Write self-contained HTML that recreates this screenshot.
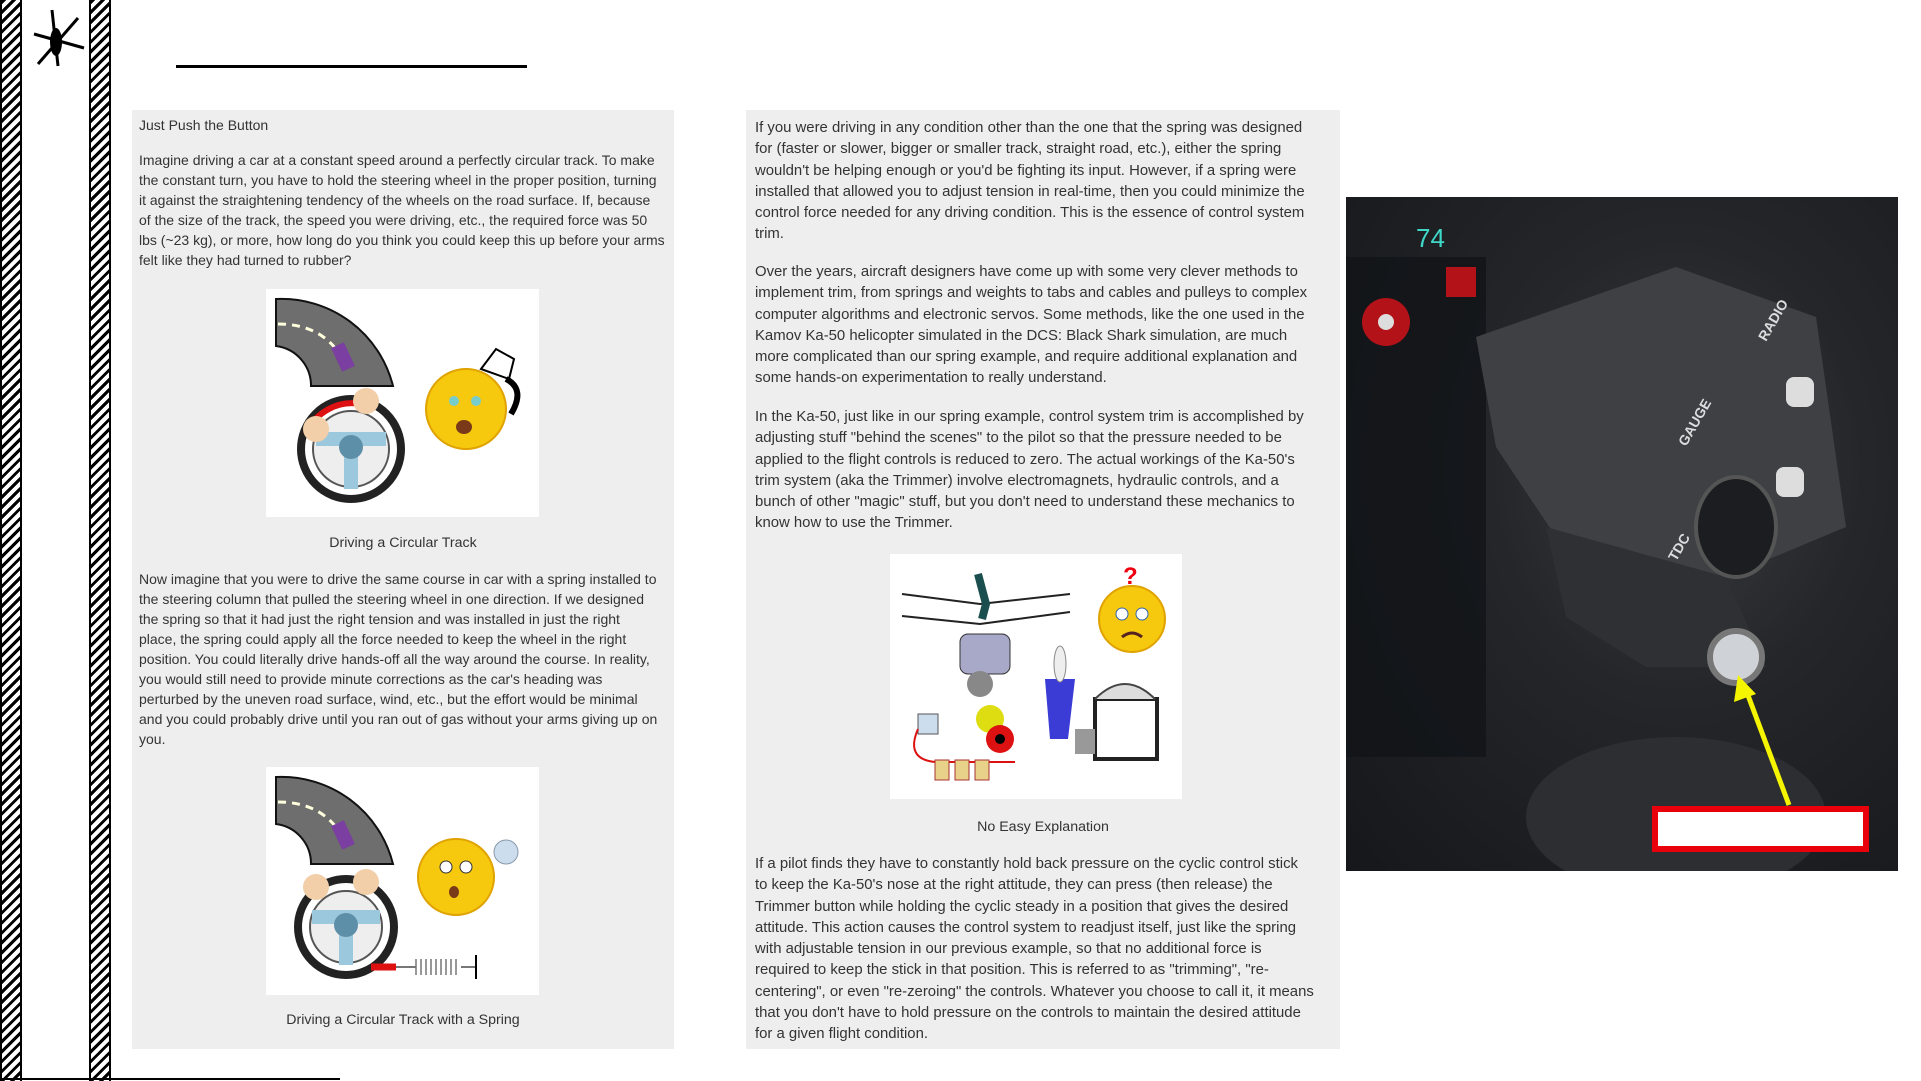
<!DOCTYPE html>
<html><head><meta charset="utf-8"><style>
*{margin:0;padding:0;box-sizing:border-box}
body{width:1921px;height:1081px;background:#fff;position:relative;overflow:hidden;font-family:"Liberation Sans",Arial,sans-serif;color:#333}
.stripe{position:absolute;top:0;height:1081px;width:22px;border-left:2px solid #000;border-right:2px solid #000;background:repeating-linear-gradient(135deg,#000 0 3px,#fff 3px 7px)}
.box{position:absolute;background:#eee}
.t{position:absolute;font-size:14px;line-height:20px;white-space:nowrap}
.t div{height:20px}
.m{font-size:14.9px;line-height:21.3px}
.m div{height:21.3px}
.cap{position:absolute;font-size:14.2px;line-height:20px;text-align:center;white-space:nowrap}
.img{position:absolute;background:#fff}
</style></head><body>
<div class="stripe" style="left:0"></div>
<div class="stripe" style="left:89px"></div>
<svg style="position:absolute;left:26px;top:6px" width="60" height="66" viewBox="0 0 60 66">
<g stroke="#000" stroke-width="3" fill="none"><line x1="8" y1="28" x2="58" y2="42"/><line x1="26" y1="4" x2="32" y2="60"/><line x1="12" y1="58" x2="52" y2="12"/></g>
<ellipse cx="30" cy="36" rx="6" ry="14" fill="#000"/></svg>
<div style="position:absolute;left:176px;top:65px;width:351px;height:3px;background:#000"></div>
<div style="position:absolute;left:0;top:1078px;width:340px;height:2px;background:#000"></div>

<div class="box" style="left:132px;top:110px;width:542px;height:939px"></div>
<div class="box" style="left:746px;top:110px;width:594px;height:939px"></div>

<div class="t" style="left:139px;top:115px"><div>Just Push the Button</div></div>
<div class="t" style="left:139px;top:150px">
<div>Imagine driving a car at a constant speed around a perfectly circular track. To make</div>
<div>the constant turn, you have to hold the steering wheel in the proper position, turning</div>
<div>it against the straightening tendency of the wheels on the road surface. If, because</div>
<div>of the size of the track, the speed you were driving, etc., the required force was 50</div>
<div>lbs (~23 kg), or more, how long do you think you could keep this up before your arms</div>
<div>felt like they had turned to rubber?</div></div>

<div class="img" style="left:266px;top:289px;width:273px;height:228px">
<svg width="273" height="228" viewBox="0 0 273 228">
<path d="M10 10 A115 115 0 0 1 127 97 L45 97 A40 40 0 0 0 10 57Z" fill="#6e6e6e" stroke="#111" stroke-width="2"/>
<path d="M12 35 Q50 35 70 60" stroke="#ffd" stroke-width="3" stroke-dasharray="8 6" fill="none"/>
<rect x="70" y="55" width="14" height="26" fill="#7a3fa0" transform="rotate(-25 77 68)"/>
<circle cx="85" cy="160" r="50" fill="#fff" stroke="#222" stroke-width="8"/>
<circle cx="85" cy="160" r="38" fill="#eee" stroke="#555" stroke-width="2"/>
<path d="M50 150 L120 150 M85 160 L85 200" stroke="#9cc8dd" stroke-width="14"/>
<circle cx="85" cy="158" r="12" fill="#5e8fa8"/>
<path d="M40 145 A50 50 0 0 1 95 115" stroke="#d11" stroke-width="6" fill="none"/>
<circle cx="50" cy="140" r="13" fill="#f2cfa8"/><circle cx="100" cy="112" r="13" fill="#f2cfa8"/>
<circle cx="200" cy="120" r="40" fill="#f6c90e" stroke="#e0a200" stroke-width="2"/>
<circle cx="188" cy="112" r="5" fill="#7cc"/><circle cx="210" cy="112" r="5" fill="#7cc"/>
<ellipse cx="198" cy="138" rx="8" ry="7" fill="#7a3a1a"/>
<path d="M215 80 l15 -20 l18 10 l-5 20z" fill="#fff" stroke="#000" stroke-width="2"/>
<path d="M240 90 Q260 100 245 125" stroke="#000" stroke-width="6" fill="none"/>
</svg></div>
<div class="cap" style="left:132px;width:542px;top:533px">Driving a Circular Track</div>

<div class="t" style="left:139px;top:569px">
<div>Now imagine that you were to drive the same course in car with a spring installed to</div>
<div>the steering column that pulled the steering wheel in one direction. If we designed</div>
<div>the spring so that it had just the right tension and was installed in just the right</div>
<div>place, the spring could apply all the force needed to keep the wheel in the right</div>
<div>position. You could literally drive hands-off all the way around the course. In reality,</div>
<div>you would still need to provide minute corrections as the car's heading was</div>
<div>perturbed by the uneven road surface, wind, etc., but the effort would be minimal</div>
<div>and you could probably drive until you ran out of gas without your arms giving up on</div>
<div>you.</div></div>

<div class="img" style="left:266px;top:767px;width:273px;height:228px">
<svg width="273" height="228" viewBox="0 0 273 228">
<path d="M10 10 A115 115 0 0 1 127 97 L45 97 A40 40 0 0 0 10 57Z" fill="#6e6e6e" stroke="#111" stroke-width="2"/>
<path d="M12 35 Q50 35 70 60" stroke="#ffd" stroke-width="3" stroke-dasharray="8 6" fill="none"/>
<rect x="70" y="55" width="14" height="26" fill="#7a3fa0" transform="rotate(-25 77 68)"/>
<circle cx="80" cy="160" r="48" fill="#fff" stroke="#222" stroke-width="8"/>
<circle cx="80" cy="160" r="36" fill="#eee" stroke="#555" stroke-width="2"/>
<path d="M46 150 L114 150 M80 160 L80 198" stroke="#9cc8dd" stroke-width="14"/>
<circle cx="80" cy="158" r="12" fill="#5e8fa8"/>
<circle cx="50" cy="120" r="13" fill="#f2cfa8"/><circle cx="100" cy="115" r="13" fill="#f2cfa8"/>
<path d="M105 200 L130 200" stroke="#d11" stroke-width="7"/>
<path d="M130 200 L150 200 M195 200 L210 200" stroke="#777" stroke-width="2"/>
<path d="M150 192 l0 16 m5 -16 l0 16 m5 -16 l0 16 m5 -16 l0 16 m5 -16 l0 16 m5 -16 l0 16 m5 -16 l0 16 m5 -16 l0 16 m5 -16 l0 16" stroke="#777" stroke-width="1.5"/>
<line x1="210" y1="188" x2="210" y2="212" stroke="#000" stroke-width="2"/>
<circle cx="190" cy="110" r="38" fill="#f6c90e" stroke="#e0a200" stroke-width="2"/>
<circle cx="180" cy="100" r="6" fill="#fff" stroke="#333"/><circle cx="200" cy="100" r="6" fill="#fff" stroke="#333"/>
<ellipse cx="188" cy="125" rx="5" ry="6" fill="#7a3a1a"/>
<circle cx="240" cy="85" r="12" fill="#cde" stroke="#89a"/>
</svg></div>
<div class="cap" style="left:132px;width:542px;top:1010px">Driving a Circular Track with a Spring</div>

<div class="t m" style="left:755px;top:118px">
<div>If you were driving in any condition other than the one that the spring was designed</div>
<div>for (faster or slower, bigger or smaller track, straight road, etc.), either the spring</div>
<div>wouldn't be helping enough or you'd be fighting its input. However, if a spring were</div>
<div>installed that allowed you to adjust tension in real-time, then you could minimize the</div>
<div>control force needed for any driving condition. This is the essence of control system</div>
<div>trim.</div></div>
<div class="t m" style="left:755px;top:262px">
<div>Over the years, aircraft designers have come up with some very clever methods to</div>
<div>implement trim, from springs and weights to tabs and cables and pulleys to complex</div>
<div>computer algorithms and electronic servos. Some methods, like the one used in the</div>
<div>Kamov Ka-50 helicopter simulated in the DCS: Black Shark simulation, are much</div>
<div>more complicated than our spring example, and require additional explanation and</div>
<div>some hands-on experimentation to really understand.</div></div>
<div class="t m" style="left:755px;top:407px">
<div>In the Ka-50, just like in our spring example, control system trim is accomplished by</div>
<div>adjusting stuff "behind the scenes" to the pilot so that the pressure needed to be</div>
<div>applied to the flight controls is reduced to zero. The actual workings of the Ka-50's</div>
<div>trim system (aka the Trimmer) involve electromagnets, hydraulic controls, and a</div>
<div>bunch of other "magic" stuff, but you don't need to understand these mechanics to</div>
<div>know how to use the Trimmer.</div></div>

<div class="img" style="left:890px;top:554px;width:292px;height:245px">
<svg width="292" height="245" viewBox="0 0 292 245">
<path d="M12 40 L90 50 L180 40 M12 62 L90 70 L180 58" stroke="#222" stroke-width="2" fill="none"/>
<path d="M88 20 L96 50 L92 65" stroke="#1b4f4f" stroke-width="8" fill="none"/>
<rect x="70" y="80" width="50" height="40" rx="8" fill="#a8a8c8" stroke="#333"/>
<circle cx="90" cy="130" r="13" fill="#888"/><circle cx="100" cy="165" r="14" fill="#dd1"/>
<circle cx="110" cy="185" r="14" fill="#d11"/><circle cx="110" cy="185" r="5" fill="#000"/>
<path d="M155 125 L185 125 L178 185 L160 185Z" fill="#3b3bd6"/>
<ellipse cx="170" cy="110" rx="6" ry="18" fill="#eee" stroke="#888"/>
<rect x="205" y="145" width="62" height="60" fill="none" stroke="#222" stroke-width="4"/>
<path d="M205 145 Q235 115 265 145" fill="#ddd" stroke="#444" stroke-width="2"/>
<rect x="185" y="175" width="20" height="25" fill="#999"/>
<rect x="28" y="160" width="20" height="20" fill="#cde" stroke="#555"/>
<path d="M28 175 Q15 205 45 208 L125 208" stroke="#d11" stroke-width="2" fill="none"/>
<rect x="45" y="206" width="14" height="20" fill="#e8d28a" stroke="#a33"/><rect x="65" y="206" width="14" height="20" fill="#e8d28a" stroke="#a33"/><rect x="85" y="206" width="14" height="20" fill="#e8d28a" stroke="#a33"/>
<circle cx="242" cy="65" r="33" fill="#f6c90e" stroke="#e0a200" stroke-width="2"/>
<circle cx="232" cy="60" r="6" fill="#fff" stroke="#36a"/><circle cx="252" cy="60" r="6" fill="#fff" stroke="#36a"/>
<path d="M232 83 Q242 75 252 83" stroke="#522" stroke-width="3" fill="none"/>
<text x="233" y="30" font-family="Liberation Sans" font-weight="bold" font-size="24" fill="#e01">?</text>
</svg></div>
<div class="cap" style="left:746px;width:594px;top:817px">No Easy Explanation</div>

<div class="t m" style="left:755px;top:854px">
<div>If a pilot finds they have to constantly hold back pressure on the cyclic control stick</div>
<div>to keep the Ka-50's nose at the right attitude, they can press (then release) the</div>
<div>Trimmer button while holding the cyclic steady in a position that gives the desired</div>
<div>attitude. This action causes the control system to readjust itself, just like the spring</div>
<div>with adjustable tension in our previous example, so that no additional force is</div>
<div>required to keep the stick in that position. This is referred to as "trimming", "re-</div>
<div>centering", or even "re-zeroing" the controls. Whatever you choose to call it, it means</div>
<div>that you don't have to hold pressure on the controls to maintain the desired attitude</div>
<div>for a given flight condition.</div></div>

<div style="position:absolute;left:1346px;top:197px;width:552px;height:674px;background:radial-gradient(ellipse at 60% 40%,#3a3b3e 0%,#24262a 40%,#15171b 100%);overflow:hidden">
<svg width="552" height="674" viewBox="0 0 552 674">
<rect x="0" y="60" width="140" height="500" fill="#111418" opacity=".8"/>
<path d="M130 140 L330 70 L470 120 L500 330 L380 380 L210 340 L150 250Z" fill="#3e4044"/>
<path d="M200 330 L380 380 L420 470 L300 470 L220 420Z" fill="#2e3034"/>
<ellipse cx="390" cy="330" rx="40" ry="50" fill="#1c1d20" stroke="#555" stroke-width="4"/>
<circle cx="390" cy="460" r="26" fill="#cfd2d6" stroke="#777" stroke-width="6"/>
<ellipse cx="330" cy="620" rx="150" ry="80" fill="#2c2e32"/>
<rect x="440" y="180" width="28" height="30" rx="8" fill="#ddd"/>
<rect x="430" y="270" width="28" height="30" rx="8" fill="#ddd"/>
<circle cx="40" cy="125" r="24" fill="#b31218"/><circle cx="40" cy="125" r="8" fill="#ddd"/>
<rect x="100" y="70" width="30" height="30" fill="#b31218"/>
<text x="70" y="50" fill="#3fd8c8" font-family="Liberation Sans" font-size="26">74</text>
<text x="340" y="250" fill="#ddd" font-family="Liberation Sans" font-weight="bold" font-size="14" transform="rotate(-60 340 250)">GAUGE</text>
<text x="420" y="145" fill="#ddd" font-family="Liberation Sans" font-weight="bold" font-size="14" transform="rotate(-60 420 145)">RADIO</text>
<text x="330" y="365" fill="#ddd" font-family="Liberation Sans" font-weight="bold" font-size="14" transform="rotate(-60 330 365)">TDC</text>
<line x1="443" y1="608" x2="400" y2="493" stroke="#f5f500" stroke-width="5"/>
<path d="M392 478 L388 505 L410 497Z" fill="#f5f500"/>
<rect x="309" y="612" width="211" height="40" fill="#fff" stroke="#e8000b" stroke-width="6"/>
</svg></div>
</body></html>
